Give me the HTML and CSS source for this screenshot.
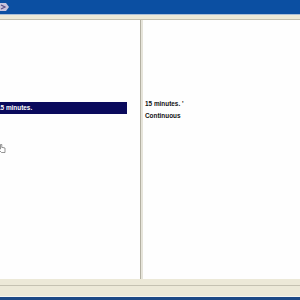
FILE: index.html
```html
<!DOCTYPE html>
<html>
<head>
<meta charset="utf-8">
<link rel="stylesheet" href="styles.css">
</head>
<body>
<div class="window">
  <div class="titlebar">
    <svg class="appicon" width="9" height="12" viewBox="0 0 9 12">
      <path d="M0 2 L6 2 L9 6 L6 10 L0 10 Z" fill="#c9c3dc"/>
      <path d="M1 4 L5 6 L1 8" fill="none" stroke="#5a4f86" stroke-width="1.2"/>
    </svg>
  </div>
  <div class="titleline"></div>
  <div class="menubar"></div>
  <div class="main">
    <div class="pane left">
      <div class="selrow"><span class="seltext">15 minutes.</span></div>
      <svg class="cursor" width="7" height="9" viewBox="0 0 7 9">
        <path d="M1.5 0.5 L1.5 5 L0.5 4.5 L0.5 6.5 L2.5 8.5 L6 8.5 L6 4 L4 3.5 L2.8 3.5 L2.8 0.5 Z" fill="#ffffff" stroke="#6a6a6a" stroke-width="0.7"/>
      </svg>
    </div>
    <div class="divider"></div>
    <div class="pane right">
      <div class="line">15 minutes. '</div>
      <div class="line">Continuous</div>
    </div>
  </div>
  <div class="statusbar">
    <div class="sb-top"></div>
    <div class="sb-line"></div>
    <div class="sb-body"></div>
    <div class="sb-hl"></div>
  </div>
  <div class="taskbar"></div>
</div>
</body>
</html>
```
FILE: styles.css
```css
html, body {
  margin: 0;
  padding: 0;
  background: #ffffff;
}
.window {
  width: 300px;
  height: 300px;
  display: flex;
  flex-direction: column;
  overflow: hidden;
  font-family: "Liberation Sans", Arial, sans-serif;
}
.titlebar {
  height: 14px;
  background: #0b4fa2;
  display: flex;
  align-items: flex-start;
}
.appicon {
  display: block;
  margin-top: 1px;
}
.titleline {
  height: 1px;
  background: #a9bdd6;
}
.menubar {
  height: 4px;
  background: #ece9d8;
  border-bottom: 1px solid #c2bfaf;
}
.main {
  height: 259px;
  display: flex;
  background: #ffffff;
}
.pane {
  background: #fefefe;
}
.left {
  width: 141px;
  position: relative;
  padding-top: 82px;
  box-sizing: border-box;
  border-right: 1px solid #b3b0a2;
}
.divider {
  width: 2px;
  background: #e6e4da;
}
.selrow {
  width: 127px;
  height: 12px;
  background: #0a0a5c;
  overflow: hidden;
  white-space: nowrap;
}
.seltext {
  display: block;
  margin-left: -3px;
  color: #ffffff;
  font-weight: bold;
  font-size: 6.4px;
  line-height: 12px;
}
.cursor {
  position: absolute;
  left: -1px;
  top: 124px;
}
.right {
  flex: 1;
  padding-top: 78px;
  padding-left: 2px;
}
.line {
  font-size: 6.4px;
  font-weight: bold;
  line-height: 12px;
  color: #111111;
  white-space: nowrap;
}
.statusbar {
  display: flex;
  flex-direction: column;
}
.sb-top {
  height: 6px;
  background: #ece9d8;
}
.sb-line {
  height: 1px;
  background: #c5c2b2;
}
.sb-body {
  height: 10px;
  background: #ece9d8;
}
.sb-hl {
  height: 1px;
  background: #f7f6f0;
}
.taskbar {
  height: 3px;
  background: #1d4a86;
}
```
